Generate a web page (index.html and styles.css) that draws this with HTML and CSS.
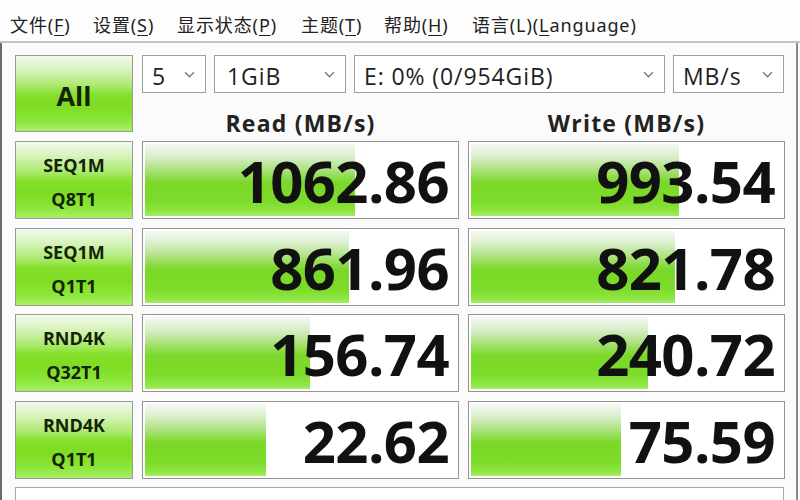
FILE: index.html
```html
<!DOCTYPE html>
<html lang="zh">
<head>
<meta charset="utf-8">
<title>CrystalDiskMark</title>
<link rel="stylesheet" href="styles.css">
</head>
<body>
<div class="menubar">
  <span class="mi">文件(<u>F</u>)</span>
  <span class="mi">设置(<u>S</u>)</span>
  <span class="mi">显示状态(<u>P</u>)</span>
  <span class="mi">主题(<u>T</u>)</span>
  <span class="mi">帮助(<u>H</u>)</span>
  <span class="mi">语言(L)(<u>L</u>anguage)</span>
</div>
<div class="client">
  <div class="top">
    <div class="btn all">All</div>
    <div class="selects">
      <div class="sel s-count"><span>5</span><svg class="chev" viewBox="0 0 10 6"><path d="M1 1 L5 5 L9 1"/></svg></div>
      <div class="sel s-size"><span>1GiB</span><svg class="chev" viewBox="0 0 10 6"><path d="M1 1 L5 5 L9 1"/></svg></div>
      <div class="sel s-drive"><span>E: 0% (0/954GiB)</span><svg class="chev" viewBox="0 0 10 6"><path d="M1 1 L5 5 L9 1"/></svg></div>
      <div class="sel s-unit"><span>MB/s</span><svg class="chev" viewBox="0 0 10 6"><path d="M1 1 L5 5 L9 1"/></svg></div>
    </div>
    <div class="head">Read (MB/s)</div>
    <div class="head">Write (MB/s)</div>
  </div>
  <div class="results">
    <div class="btn label"><span>SEQ1M</span><span>Q8T1</span></div>
    <div class="cell"><div class="bar" style="width:210px"></div><div class="val">1062.86</div></div>
    <div class="cell"><div class="bar" style="width:208px"></div><div class="val">993.54</div></div>

    <div class="btn label"><span>SEQ1M</span><span>Q1T1</span></div>
    <div class="cell"><div class="bar" style="width:204px"></div><div class="val">861.96</div></div>
    <div class="cell"><div class="bar" style="width:204px"></div><div class="val">821.78</div></div>

    <div class="btn label"><span>RND4K</span><span>Q32T1</span></div>
    <div class="cell"><div class="bar" style="width:165px"></div><div class="val">156.74</div></div>
    <div class="cell"><div class="bar" style="width:177px"></div><div class="val">240.72</div></div>

    <div class="btn label"><span>RND4K</span><span>Q1T1</span></div>
    <div class="cell"><div class="bar" style="width:121px"></div><div class="val">22.62</div></div>
    <div class="cell"><div class="bar" style="width:150px"></div><div class="val">75.59</div></div>
  </div>
  <div class="comment"></div>
</div>
</body>
</html>
```
FILE: styles.css
```css
* { box-sizing: border-box; }
html, body { margin: 0; padding: 0; background: #fbfbfb; }
body {
  width: 800px;
  height: 500px;
  overflow: hidden;
  font-family: "Open Sans", "Noto Sans", "Noto Sans CJK SC", sans-serif;
  color: #1a1a1a;
}
.menubar {
  height: 43px;
  display: grid;
  grid-template-columns: 83px 84px 124px 83px 88px auto;
  align-items: center;
  padding: 7px 0 0 10px;
  border-bottom: 2px solid #c4c4c4;
  font-family: "Noto Sans", "Noto Sans CJK SC", sans-serif;
  font-size: 18px;
  letter-spacing: 0.9px;
  color: #222;
  background: #fdfdfd;
}
.mi { white-space: nowrap; }
.mi u { text-underline-offset: 3px; text-decoration-thickness: 1px; }
.client {
  width: 798px;
  height: 457px;
  border-left: 2px solid #6a6a6a;
  border-right: 2px solid #8a8a8a;
  padding: 12px 0 0 13px;
  background: #fbfbfb;
}
.top {
  display: grid;
  grid-template-columns: 118px 317px 317px;
  grid-template-rows: 38px 39px;
  column-gap: 9px;
}
.btn {
  border: 1px solid #9a9a9a;
  background: linear-gradient(to bottom, #f3faee 0%, #d8f3bd 18%, #aeea74 38%, #84e02a 52%, #7edc22 66%, #8be638 86%, #a8ef66 100%);
  color: #142208;
  font-weight: 700;
  display: flex;
  flex-direction: column;
  align-items: center;
  justify-content: center;
}
.all {
  grid-row: 1 / span 2;
  font-size: 27px;
  padding-top: 4px;
}
.selects {
  grid-column: 2 / span 2;
  display: flex;
  gap: 8px;
}
.sel {
  height: 38px;
  border: 1px solid #a0a0a0;
  background: #fff;
  display: flex;
  align-items: center;
  justify-content: space-between;
  padding: 3px 10px 0 9px;
  font-size: 23px;
  letter-spacing: 0.9px;
  color: #1e1e1e;
}
.s-count { width: 64px; }
.s-size { width: 132px; padding-left: 12px; }
.s-drive { width: 311px; }
.s-unit { width: 111px; }
.chev { width: 11px; height: 7px; fill: none; stroke: #777; stroke-width: 1.2; margin-bottom: 3px; }
.head {
  display: flex;
  align-items: center;
  justify-content: center;
  font-size: 23px;
  letter-spacing: 1.2px;
  font-weight: 700;
  color: #222;
  padding-top: 20px;
}
.results {
  margin-top: 9px;
  display: grid;
  grid-template-columns: 118px 317px 317px;
  grid-auto-rows: 78px;
  column-gap: 9px;
  row-gap: 8.6px;
}
.label { font-size: 18px; line-height: 34px; padding-top: 4px; }
.label span { display: block; }
.cell {
  border: 1px solid #949494;
  background: #fff;
  padding: 2px;
  display: grid;
}
.bar {
  grid-area: 1 / 1;
  height: 100%;
  background: linear-gradient(to bottom, #f5f9f3 0%, #dcefcf 16%, #b6e48e 32%, #8edc4c 46%, #7bd828 54%, #7ddb2a 80%, #8fe644 94%, #a6ec66 100%);
}
.val {
  grid-area: 1 / 1;
  align-self: center;
  justify-self: end;
  padding-right: 7px;
  font-size: 58px;
  font-weight: 700;
  color: #111;
  line-height: 1;
  margin-top: 2px;
  letter-spacing: -0.6px;
}
.comment {
  margin-top: 8px;
  width: 769px;
  height: 30px;
  border: 1px solid #a8a8a8;
  background: #fff;
}
```
